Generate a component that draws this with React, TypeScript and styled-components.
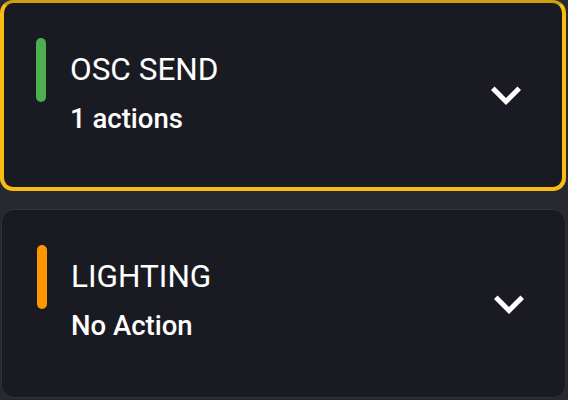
import React from "react";
import styled, { createGlobalStyle } from "styled-components";

const GlobalStyle = createGlobalStyle`
    html, body {
        margin: 0;
        padding: 0;
        background: #272830;
        font-family: Roboto, "Noto Sans", sans-serif;
        overflow: hidden;
    }
`;

const List = styled.div`
    width: 568px;
    height: 400px;
    display: flex;
    flex-direction: column;
    gap: 18px;
    box-sizing: border-box;
`;

const Card = styled.div<{ $selected?: boolean }>`
    box-sizing: border-box;
    height: ${(p) => (p.$selected ? "191px" : "189px")};
    margin: ${(p) => (p.$selected ? "0 2px 0 0" : "0 2px 0 1px")};
    background-color: #1a1b22;
    border: ${(p) => (p.$selected ? "4px solid #f8bc12" : "1px solid #30313a")};
    border-top: ${(p) => (p.$selected ? "3px solid #cda20e" : "1px solid #30313a")};
    border-radius: 13px;
    display: flex;
    align-items: center;
    justify-content: space-between;
    padding: 0 26px 0 ${(p) => (p.$selected ? "32px" : "35px")};
`;

const Info = styled.div`
    display: flex;
    flex-direction: column;
    align-self: flex-start;
    padding-top: 35px;
`;

const TitleRow = styled.div`
    display: flex;
    align-items: center;
    gap: 24px;
`;

const ColorBar = styled.div<{ $color: string }>`
    width: 10px;
    height: 64px;
    border-radius: 5px;
    background-color: ${(p) => p.$color};
`;

const Title = styled.span`
    font-size: 31.5px;
    font-weight: 400;
    color: #ffffff;
    line-height: 36px;
`;

const Subtitle = styled.span`
    margin-left: 34px;
    margin-top: 1px;
    font-size: 27.5px;
    font-weight: 500;
    color: #ffffff;
    line-height: 31px;
`;

const ChevronButton = styled.div`
    width: 60px;
    height: 60px;
    display: flex;
    align-items: center;
    justify-content: center;
    color: #ffffff;
`;

const ChevronIcon = () => (
    <svg width="62" height="62" viewBox="0 0 24 24" fill="currentColor">
        <path d="M16.59 8.59L12 13.17 7.41 8.59 6 10l6 6 6-6z" />
    </svg>
);

const groups = [
    { name: "OSC SEND", status: "1 actions", color: "#4caf50", selected: true },
    { name: "LIGHTING", status: "No Action", color: "#ff9800", selected: false },
];

const App: React.FC = () => {
    return (
        <>
            <GlobalStyle />
            <List>
                {groups.map((g) => (
                    <Card key={g.name} $selected={g.selected}>
                        <Info>
                            <TitleRow>
                                <ColorBar $color={g.color} />
                                <Title>{g.name}</Title>
                            </TitleRow>
                            <Subtitle>{g.status}</Subtitle>
                        </Info>
                        <ChevronButton>
                            <ChevronIcon />
                        </ChevronButton>
                    </Card>
                ))}
            </List>
        </>
    );
};

export default App;
